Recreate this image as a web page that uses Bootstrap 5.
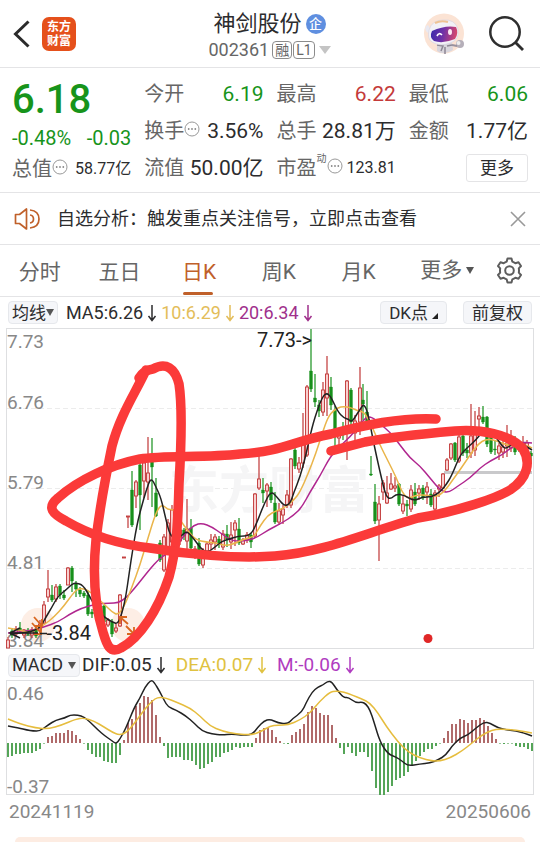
<!DOCTYPE html>
<html lang="zh-CN">
<head>
<meta charset="utf-8">
<meta name="viewport" content="width=device-width, initial-scale=1">
<title>神剑股份 002361</title>
<link rel="stylesheet" href="https://cdn.jsdelivr.net/npm/bootstrap@5.3.0/dist/css/bootstrap.min.css">
<style>
  :root { --up:#c43a3a; --down:#17941b; --ink:#2c2c2e; --dim:#666; --accent:#c0602a; --line:#e4e4e6; }
  body { font-family: Roboto, "Noto Sans CJK SC", sans-serif; color: var(--ink); background:#fff; }
  .app { min-height:100vh; overflow:hidden; }
  .rule { border-bottom:1px solid var(--line); }
  .c-up { color:var(--up); } .c-down { color:var(--down); } .c-dim { color:var(--dim); }
  button, select { font-family:inherit; color:inherit; }
  .plain { border:0; background:none; padding:0; line-height:1; }
  svg { display:block; flex:none; }

  .top-bar { display:grid; grid-template-columns:1fr auto 1fr; height:68px; padding:0 16px 0 13px; }
  .app-logo { width:34px; height:34px; border-radius:7px; background:#e5501b; color:#fff; font-size:12px; font-weight:700; line-height:14px; text-align:center; padding-top:3px; text-decoration:none; }
  .stock-block { padding:4px 0 0 2px; }
  .stock-name { font-size:22px; line-height:28px; margin:0; font-weight:400; }
  .ent { width:20px; height:20px; border-radius:50%; background:#5f8fe0; color:#fff; font-size:13px; font-weight:500; line-height:19px; text-align:center; }
  .code-row { font-size:18px; line-height:24px; color:var(--dim); gap:3px; }
  .tagbox { border:1px solid #8c8c8c; border-radius:4px; font-size:14px; line-height:16px; height:18px; padding:0 2px; margin-right:1px; }

  .quotes { display:grid; grid-template-columns:repeat(4,1fr); column-gap:13px; height:125px; padding:7px 12px 0; }
  .q-row { display:flex; justify-content:space-between; align-items:center; height:37px; white-space:nowrap; font-size:21px; line-height:28px; }
  .q-label { font-size:20px; color:var(--dim); display:flex; align-items:center; }
  .q-label svg { margin-bottom:4px; }
  .q-small { font-size:16px; }
  .last-price { font-size:40px; font-weight:500; line-height:50px; }
  .delta { font-size:20px; height:25px; }
  .sup { font-size:10px; line-height:10px; align-self:flex-start; }
  .more-btn { width:62px; height:28px; border:1px solid var(--line); border-radius:3px; background:#fff; font-size:17px; line-height:24px; padding:0; margin-left:auto; }

  .notice { height:52px; padding:0 14px; font-size:18px; }
  .notice a { color:inherit; text-decoration:none; }
  .periods { display:grid; grid-template-columns:repeat(5,80fr) 98fr auto; justify-items:center; height:52px; padding-right:17px; font-size:21px; color:var(--dim); }
  .periods a { color:inherit; text-decoration:none; line-height:30px; padding:10px 0 8px; white-space:nowrap; }
  .periods a.on { color:var(--accent); position:relative; }
  .periods a.on::after { content:""; position:absolute; left:1px; right:3px; bottom:0; height:3px; border-radius:2px; background:var(--accent); }

  .ind-row { height:31px; padding:0 8px; font-size:18px; line-height:24px; white-space:nowrap; }
  .macd-row { height:30px; font-size:19px; gap:10px; }
  .pill { display:flex; align-items:center; height:23px; border:1px solid #e6e8ec; border-radius:4px; background:#f5f6f9; font-size:17px; line-height:20px; padding:0 3px; }
  .pill select { appearance:none; border:0; background:none; padding:0; outline:0; line-height:20px; }
  .macd-row .pill { font-size:18px; margin-right:-8px; }
  .c-y { color:#e3bd5a; } .c-y2 { color:#e0c240; } .c-m { color:#a0308c; } .c-m2 { color:#b03cc0; }
  .plot { width:100%; height:auto; overflow:visible; }
  .price-plot { position:relative; z-index:1; pointer-events:none; }
  .axis { font-size:19px; fill:#888; }
  .mark-txt { font-size:20px; fill:#222; }
  .dates { height:32px; padding:0 9px; font-size:19px; line-height:32px; color:#888; }
  .promo { margin:9px 15px 0; border-radius:18px 18px 0 0; background:#fdece2; min-height:5px; }
</style>
<script src="https://cdn.jsdelivr.net/npm/bootstrap@5.3.0/dist/js/bootstrap.bundle.min.js"></script>
</head>
<body>
<svg width="0" height="0" class="position-absolute" aria-hidden="true">
  <symbol id="down" viewBox="0 0 10 18"><path d="M5 1V16M1.500 12L5 16.500L8.500 12" fill="none" stroke="currentColor" stroke-width="1.500"/></symbol>
  <symbol id="dots" viewBox="0 0 16 16"><circle cx="8" cy="8" r="7" fill="none" stroke="#999"/><circle cx="4.700" cy="8" r=".9" fill="#888"/><circle cx="8" cy="8" r=".9" fill="#888"/><circle cx="11.300" cy="8" r=".9" fill="#888"/></symbol>
</svg>
<div class="app d-flex flex-column">

<header class="top-bar rule align-items-center">
  <div class="d-flex align-items-center gap-2">
    <button class="plain" aria-label="返回"><svg width="21" height="28" viewBox="0 0 21 28"><path d="M15.500 1.500L2.500 14L15.500 26.500" fill="none" stroke="#2b2b2b" stroke-width="3"/></svg></button>
    <a href="#" class="app-logo">东方<br>财富</a>
  </div>
  <div class="stock-block d-flex flex-column align-items-center">
    <div class="d-flex align-items-center gap-1"><h1 class="stock-name">神剑股份</h1><span class="ent">企</span></div>
    <div class="code-row d-flex align-items-center"><span>002361</span>
      <span class="d-flex"><span class="tagbox">融</span><span class="tagbox">L1</span></span>
      <svg width="12" height="8" viewBox="0 0 12 8"><path d="M0 0H12L6 8Z" fill="#c4c4c4"/></svg></div>
  </div>
  <div class="d-flex align-items-center justify-content-end gap-4">
    <button class="plain" aria-label="智能助手"><svg width="42" height="42" viewBox="0 0 42 42">
      <defs><linearGradient id="visor" x2="1" y2=".1"><stop stop-color="#3b2cab"/><stop offset=".5" stop-color="#7032a8"/><stop offset="1" stop-color="#d4466e"/></linearGradient></defs>
      <circle cx="21" cy="20.500" r="20" fill="#fbe3d4"/>
      <path d="M14 30Q21 27 29 29L30 37Q21 43 14 38Z" fill="#d9d6dd"/><path d="M14 32L20 33L18 38M24 33L29 32M22 34V41" stroke="#8d8794" stroke-width="1.500" fill="none"/>
      <circle cx="37" cy="31" r="4" fill="#b5afb9"/><circle cx="35.500" cy="30" r="2" fill="#eee"/><path d="M29 32L34 33" stroke="#99929f" stroke-width="2"/>
      <path d="M3 13Q1 17 5 20L8 17L5 12Z" fill="#e9e9f2"/>
      <path d="M6 17Q9 7 20 7Q32 6 35 16Q37 27 27 30Q17 34 9 29Q4 26 6 17Z" fill="#f2f1f6" stroke="#d9d6e2" stroke-width=".7"/>
      <path d="M9 18Q22 12 33 14Q36 20 32 26Q20 31 11 28Q6 24 9 18Z" fill="url(#visor)"/>
      <path d="M12 10Q18 7 25 9" stroke="#efc394" stroke-width="2" fill="none"/>
      <path d="M14 23Q16 19 19 22" stroke="#fff" stroke-width="1.700" fill="none"/><ellipse cx="27" cy="19" rx="2" ry="3" fill="#fde9f4"/>
    </svg></button>
    <button class="plain" aria-label="搜索"><svg width="35" height="36" viewBox="0 0 35 36"><circle cx="16" cy="16" r="14.700" fill="none" stroke="#2e2e2e" stroke-width="2.500"/><path d="M26 26L34 34" stroke="#2e2e2e" stroke-width="2.800"/></svg></button>
  </div>
</header>

<section class="quotes rule">
  <div>
    <div class="last-price c-down">6.18</div>
    <div class="q-row delta c-down"><span>-0.48%</span><span>-0.03</span></div>
    <div class="q-row"><span class="q-label">总值<svg width="16" height="16"><use href="#dots"/></svg></span><span class="q-small">58.77亿</span></div>
  </div>
  <div>
    <div class="q-row"><span class="q-label">今开</span><span class="c-down">6.19</span></div>
    <div class="q-row"><span class="q-label">换手<svg width="16" height="16"><use href="#dots"/></svg></span><span>3.56%</span></div>
    <div class="q-row"><span class="q-label">流值</span><span>50.00亿</span></div>
  </div>
  <div>
    <div class="q-row"><span class="q-label">最高</span><span class="c-up">6.22</span></div>
    <div class="q-row"><span class="q-label">总手</span><span>28.81万</span></div>
    <div class="q-row"><span class="q-label">市盈<span class="sup">动</span><svg width="16" height="16"><use href="#dots"/></svg></span><span class="q-small">123.81</span></div>
  </div>
  <div>
    <div class="q-row"><span class="q-label">最低</span><span class="c-down">6.06</span></div>
    <div class="q-row"><span class="q-label">金额</span><span>1.77亿</span></div>
    <div class="q-row"><button class="more-btn">更多</button></div>
  </div>
</section>

<section class="notice rule d-flex align-items-center">
  <svg class="me-3" width="27" height="24" viewBox="0 0 27 24" fill="none" stroke="#c0602a" stroke-width="1.700"><path d="M1.500 7.500H5.500L12.500 2V22L5.500 16.500H1.500Z" stroke-linejoin="round"/><path d="M16 8Q19.500 8.500 19.500 12Q19.500 15.500 16 16M16 3Q25 4 25 12Q25 20 16 21"/></svg>
  <a href="#" class="flex-grow-1">自选分析：触发重点关注信号，立即点击查看</a>
  <button class="plain" aria-label="关闭"><svg width="16" height="16" viewBox="0 0 16 16"><path d="M1 1L15 15M15 1L1 15" stroke="#999" stroke-width="1.600"/></svg></button>
</section>

<nav class="periods rule align-items-center">
  <a href="#">分时</a><a href="#">五日</a><a href="#" class="on" aria-current="page">日K</a><a href="#">周K</a><a href="#">月K</a>
  <button class="plain d-flex align-items-center gap-1">更多<svg width="8" height="7" viewBox="0 0 8 7"><path d="M0 0H8L4 7Z" fill="#555"/></svg></button>
  <button class="plain" aria-label="设置"><svg width="27" height="27" viewBox="0 0 27 27" fill="none" stroke="#5d5d5d" stroke-width="2" stroke-linejoin="round"><path d="M11.500 1.500H15.500L16.300 4.600Q18 5.200 19.400 6.200L22.500 5.300L25 9L22.800 11.400Q23.200 13.500 22.800 15.600L25 18L22.500 21.700L19.400 20.800Q18 21.800 16.300 22.400L15.500 25.500H11.500L10.700 22.400Q9 21.800 7.600 20.800L4.500 21.700L2 18L4.200 15.600Q3.800 13.500 4.200 11.400L2 9L4.500 5.300L7.600 6.200Q9 5.200 10.700 4.600Z"/><circle cx="13.500" cy="13.500" r="4.300"/></svg></button>
</nav>

<div class="ind-row d-flex align-items-center">
  <label class="pill"><select aria-label="主图指标"><option>均线</option></select><svg width="8" height="7" viewBox="0 0 8 7"><path d="M0 0H8L4 7Z" fill="#555"/></svg></label>
  <span class="d-flex align-items-center ms-2">MA5:6.26<svg class="ms-1" width="10" height="18"><use href="#down"/></svg></span>
  <span class="d-flex align-items-center ms-1 c-y">10:6.29<svg class="ms-1" width="10" height="18"><use href="#down"/></svg></span>
  <span class="d-flex align-items-center ms-1 c-m">20:6.34<svg class="ms-1" width="10" height="18"><use href="#down"/></svg></span>
  <div class="d-flex gap-3 ms-auto">
    <button class="pill px-2">DK点<svg class="ms-1 align-self-end mb-1" width="6" height="6" viewBox="0 0 6 6"><path d="M6 0V6H0Z" fill="#222"/></svg></button>
    <button class="pill px-2">前复权</button>
  </div>
</div>

<svg class="plot price-plot" viewBox="0 328 540 322" role="img" aria-label="日K线图">
  <g fill="none" stroke="#dedfe1"><rect x="6.500" y="328.500" width="527" height="320"/><path d="M7 408.500H533M7 488.500H533M7 568.500H533" stroke="#ececec" stroke-dasharray="5 3"/></g>
  <text x="169" y="508" font-size="50" font-weight="700" fill="#f5f5f6">东方财富</text>
  <circle cx="38" cy="625" r="17" fill="#fdeee5"/><circle cx="128" cy="625" r="17" fill="#fdeee5"/>
  <g class="axis"><text x="7" y="348">7.73</text><text x="7" y="409">6.76</text><text x="7" y="489">5.79</text><text x="7" y="569">4.81</text><text x="7" y="647">3.84</text></g>
  <path d="M444 472.500H532" stroke="#c9c9cb" stroke-width="3"/>
  <g id="candles"></g>
  <g id="averages" fill="none" stroke-width="1.500" stroke-linejoin="round"></g>
  <g fill="none" stroke="#d9661f" stroke-width="1.800"><path d="M34 617L42 626M42 619V626H35M32 623L41 633M41 626V634H34"/><path d="M128 624L120 617M120 624V617H127M126 626L134 634M134 627V634H127"/></g>
  <path d="M20 628L10 633L20 638M12 633H38M40 633.500H47" fill="none" stroke="#222" stroke-width="1.500"/>
  <g class="mark-txt"><text x="257" y="347">7.73-&gt;</text><text x="91" y="640" text-anchor="end">-3.84</text></g>
  <circle cx="428" cy="638.500" r="4.500" fill="#e02727"/>
  <g fill="none" stroke="#fb3a39" stroke-width="9.500" stroke-linecap="round" stroke-linejoin="round">
    <path d="M139 378Q144 370 153 369C166 362 175 368 179 384C183 410 181 450 179 484C178 520 177 548 169 577C158 610 140 638 121 648C109 655 106 642 103 632C93 600 93 570 96 540C100 505 106 475 112 446C120 415 136 392 146 370"/>
    <path d="M436 419C398 417 360 426 331 434C290 442 285 451 240 454C205 458 165 455 140 459C110 465 78 480 58 498C46 508 53 514 66 521C90 535 118 544 150 548C185 554 235 559 275 556C325 552 365 533 418 518C460 511 496 498 510 490C528 478 531 462 523 449C510 434 480 429 455 431C420 434 390 437 365 442L331 451"/>
  </g>
</svg>

<div class="ind-row macd-row d-flex align-items-center">
  <label class="pill"><select aria-label="副图指标"><option>MACD</option></select><svg class="ms-1" width="8" height="7" viewBox="0 0 8 7"><path d="M0 0H8L4 7Z" fill="#555"/></svg></label>
  <span class="d-flex align-items-center">DIF:0.05<svg class="ms-1" width="10" height="18"><use href="#down"/></svg></span>
  <span class="d-flex align-items-center c-y2">DEA:0.07<svg class="ms-1" width="10" height="18"><use href="#down"/></svg></span>
  <span class="d-flex align-items-center c-m2">M:-0.06<svg class="ms-1" width="10" height="18"><use href="#down"/></svg></span>
</div>

<svg class="plot" viewBox="0 680 540 116" role="img" aria-label="MACD 图">
  <rect x="6.500" y="680.500" width="527" height="114" fill="none" stroke="#dedfe1"/>
  <g id="bars"></g>
  <g id="signals" fill="none" stroke-width="1.500" stroke-linejoin="round"></g>
  <g class="axis"><text x="7" y="700">0.46</text><text x="7" y="793">-0.37</text></g>
</svg>

<div class="dates d-flex justify-content-between"><span>20241119</span><span>20250606</span></div>
<div class="promo flex-grow-1"></div>
</div>

<script>
const NS = 'http://www.w3.org/2000/svg';
function add(parent, tag, attrs) {
  const el = document.createElementNS(NS, tag);
  for (const k in attrs) el.setAttribute(k, attrs[k]);
  document.getElementById(parent).appendChild(el);
}
// x, colour, high, low, body top, body bottom
const candles = `8 r 637 648 640 648,12 g 628 638 631 635,16 r 626 636 629 634,20 g 622 633 628 631,24 r 629 638 630 635,28 g 628 636 630 634,32 r 627 638 630 635,36 g 625 638 629 636,40 r 620 634 624 630,
44 r 601 624 605 623,48 r 570 602 589 597,52 g 585 602 595 600,56 r 584 602 587 599,60 g 584 599 586 595,64 g 590 600 595 598,68 r 567 585 568 585,72 g 566 592 568 581,76 g 581 597 584 589,80 g 587 597 590 594,84 g 591 598 593 596,88 g 591 616 595 614,92 g 609 618 612 614,96 r 606 618 609 615,100 g 606 617 610 615,104 g 605 624 606 622,108 r 618 627 620 625,112 g 619 637 622 634,116 r 624 633 628 631,120 r 594 627 595 626,124 r 557 558 557 558,128 r 516 528 516 517,132 g 471 527 490 525,136 r 480 508 482 496,140 g 461 530 465 495,144 r 461 498 463 481,148 r 437 500 473 482,152 g 438 507 459 467,156 g 478 517 493 516,160 g 540 562 543 560,164 r 534 572 537 570,168 r 519 555 523 549,172 r 505 548 510 542,176 g 520 548 525 545,180 r 525 545 530 541,184 g 528 540 530 536,
187 r 499 549 529 541,191 g 519 549 528 548,195 r 546 559 549 550,199 g 538 566 543 564,203 r 548 568 558 565,207 r 542 557 544 555,211 r 534 550 540 544,215 r 534 550 537 542,219 g 536 548 539 543,223 r 530 550 534 547,227 g 525 547 534 539,231 r 522 549 535 542,235 r 520 546 523 530,239 g 518 545 529 543,243 r 538 545 540 544,247 r 532 543 535 540,251 g 533 548 535 542,255 r 493 538 494 536,259 r 454 490 479 488,263 g 478 503 490 493,267 r 483 507 485 491,271 g 482 503 487 500,275 g 492 524 503 522,279 r 503 525 511 522,283 r 505 524 509 515,287 r 490 508 495 505,291 r 458 508 459 505,295 g 445 469 450 466,299 r 457 473 463 469,303 r 413 468 440 463,307 r 385 457 387 455,311 g 329 392 371 389,315 g 374 407 398 402,319 g 400 417 405 411,323 r 382 416 390 412,327 r 356 416 374 398,331 g 377 410 387 405,335 g 406 450 410 437,339 r 430 450 435 438,343 g 422 440 430 435,347 r 380 460 381 430,351 g 388 428 390 422,355 r 415 440 421 433,360 r 367 435 388 422,363 g 384 420 400 404,367 g 391 430 412 428,371 g 456 476 474 475,375 g 484 524 502 521,379 r 496 561 504 520,383 r 480 500 483 492,387 r 476 504 493 503,391 r 473 490 484 489,395 r 477 492 486 488,399 g 483 506 484 504,403 r 496 514 504 511,407 g 500 516 504 506,411 r 485 512 490 509,415 g 483 506 492 504,419 r 485 500 489 493,423 g 485 500 488 498,427 r 482 504 487 492,431 g 489 507 494 505,435 r 490 510 493 509,439 r 484 497 486 489,443 r 473 489 474 488,447 r 458 471 460 470,451 r 443 460 444 458,455 g 442 462 443 460,459 r 435 463 437 461,463 g 434 456 436 453,467 g 443 458 450 453,471 r 404 458 436 453,475 r 411 456 431 450,479 r 407 436 416 419,483 g 406 424 417 422,487 g 416 447 417 444,491 g 432 454 435 452,495 g 441 455 449 450,499 r 443 460 446 453,503 r 440 458 447 452,507 r 425 457 443 446,511 r 430 452 440 448,515 g 436 455 438 452,519 g 440 452 444 448,523 r 436 452 443 447,527 r 440 453 443 449,531 g 451 464 453 456`;
for (const row of candles.split(',')) {
  const [x, c, hi, lo, top, bottom] = row.trim().split(' ');
  const up = c === 'r', color = up ? '#c03636' : '#17901b';
  add('candles', 'path', { d: `M${x} ${hi}V${lo}`, stroke: color, 'stroke-width': 1.2 });
  add('candles', 'rect', { x: x - 1.5, y: top, width: 3, height: Math.max(1, bottom - top), fill: up ? '#f8cfcf' : color, stroke: color, 'stroke-width': up ? .9 : .3 });
}
// Smooth path through points by quadratic midpoints
function smooth(text) {
  const p = text.split(' ').map(s => s.split(',').map(Number));
  let d = 'M' + p[0];
  for (let i = 1; i < p.length - 1; i++) d += `Q${p[i]} ${(p[i][0] + p[i + 1][0]) / 2},${(p[i][1] + p[i + 1][1]) / 2}`;
  return d + 'L' + p[p.length - 1];
}
const line = (parent, color, pts) => add(parent, 'path', { d: smooth(pts), stroke: color });
line('averages', '#b0268f', '8,633 30,631 44,627 58,622 70,614 82,608 96,604 110,603 118,603 126,598 134,589 142,579 150,569 158,560 166,554 174,550 180,541 186,533 194,525 202,523 212,527 222,534 232,541 244,541 256,538 268,530 282,523 294,515 302,507 310,492 320,476 330,457 340,446 350,437 358,427 366,417 372,417 380,424 390,432 400,445 410,458 420,466 430,478 440,490 448,493 458,486 470,478 480,468 490,461 502,455 512,447 520,442 532,443');
line('averages', '#eab54a', '8,628 20,630 30,633 44,625 54,617 64,606 74,592 80,588 88,590 96,597 104,604 112,612 118,615 124,607 132,587 140,565 148,538 156,512 162,504 168,510 174,509 180,520 188,531 196,540 206,542 216,543 226,546 236,543 244,539 254,537 260,526 268,515 276,511 284,508 294,500 300,492 308,474 316,453 322,434 328,417 334,410 342,406 352,408 358,411 364,412 370,422 380,445 388,461 396,477 402,492 408,499 416,495 426,495 436,497 444,492 452,481 462,467 470,455 478,444 486,439 494,440 502,443 510,446 518,445 526,445 532,448');
line('averages', '#222222', '10,634 20,633 30,632 40,628 46,617 52,607 58,596 66,590 72,584 76,583 83,585 90,597 96,608 104,617 112,622 118,624 122,613 126,596 131,560 137,524 142,505 146,491 151,477 156,487 161,498 166,520 170,535 176,540 182,535 187,531 194,539 202,550 208,552 214,548 222,541 230,539 238,536 250,536 256,525 264,504 271,491 277,497 284,506 290,504 294,492 300,477 306,455 312,427 318,408 323,396 327,393 331,397 338,412 344,418 348,419 352,422 357,414 361,408 364,404 368,413 373,440 380,472 386,497 391,499 396,494 404,495 414,501 422,497 432,497 440,492 446,485 452,475 460,455 468,447 476,440 482,432 490,432 496,437 502,446 506,449 512,444 518,444 524,445 532,450');

const bars = [-14,-13,-11,-11,-10,-10,-10,-8,-6,0,6,7,10,10,10,13,12,8,4,0,-7,-11,-14,-14,-18,-19,-20,-20,-12,3,20,24,37,40,47,46,43,28,6,-3,-15,-14,-14,-14,-17,-17,-18,-22,-26,-25,-21,-19,-14,-14,-10,-9,-7,-4,-5,-4,-4,-4,5,13,15,16,13,6,2,0,-1,8,11,14,19,31,37,35,30,28,28,18,5,-5,-11,-4,-10,-13,-9,-9,-14,-28,-45,-52,-52,-49,-43,-37,-35,-33,-29,-23,-18,-13,-9,-6,-6,-3,0,5,12,19,19,24,23,20,23,23,25,23,17,10,4,0,-1,0,0,-3,-4,-4,-6,-8];
bars.forEach((v, i) => add('bars', 'rect', { x: 7 + 4 * i, y: v > 0 ? 743 - v : 743, width: 2, height: Math.max(.6, Math.abs(v)), fill: v > 0 ? '#b06a6a' : '#55a558' }));
line('signals', '#222222', '8,726 19,728 27,730 33,731 40,731 48,725 56,720 65,718 70,715 78,715 84,717 90,722 98,730 105,736 111,740 116,744 120,739 126,728 134,708 140,698 145,687 151,680 154,682 160,692 164,700 168,707 176,710 186,716 194,723 202,731 212,734 222,735 232,734 240,735 252,735 258,727 264,721 270,719 278,723 288,724 292,719 302,712 306,703 312,692 318,687 323,685 328,681 332,682 337,690 344,698 348,697 356,703 362,702 366,704 370,710 374,722 380,742 388,754 396,757 402,761 408,766 420,764 430,763 438,760 446,755 452,746 460,738 468,735 476,728 484,722 490,723 498,728 508,730 516,731 524,733 532,736');
line('signals', '#e6bd3e', '8,719 20,724 36,728 48,729 62,725 76,719 84,718 94,721 104,727 112,732 119,735 126,733 134,724 144,710 152,701 158,697 166,698 176,702 190,708 200,716 210,726 222,731 236,734 252,735 262,731 270,726 278,725 288,725 300,720 310,713 320,701 330,692 336,691 344,692 352,695 362,699 370,703 378,713 386,726 398,742 408,752 420,758 432,761 440,761 450,758 462,751 472,743 482,735 492,730 500,729 516,730 532,733');
</script>
</body>
</html>
